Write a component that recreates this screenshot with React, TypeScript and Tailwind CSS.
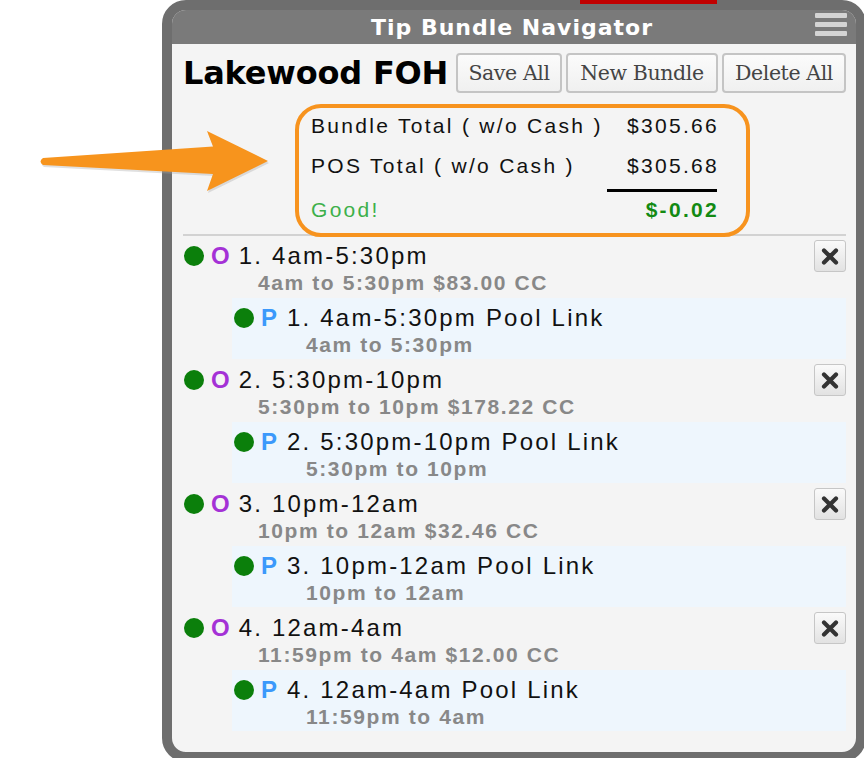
import React from "react";

interface PoolLink {
  title: string;
  range: string;
}

interface Bundle {
  title: string;
  detail: string;
  pool: PoolLink;
}

const bundles: Bundle[] = [
  {
    title: "1. 4am-5:30pm",
    detail: "4am to 5:30pm $83.00 CC",
    pool: { title: "1. 4am-5:30pm Pool Link", range: "4am to 5:30pm" },
  },
  {
    title: "2. 5:30pm-10pm",
    detail: "5:30pm to 10pm $178.22 CC",
    pool: { title: "2. 5:30pm-10pm Pool Link", range: "5:30pm to 10pm" },
  },
  {
    title: "3. 10pm-12am",
    detail: "10pm to 12am $32.46 CC",
    pool: { title: "3. 10pm-12am Pool Link", range: "10pm to 12am" },
  },
  {
    title: "4. 12am-4am",
    detail: "11:59pm to 4am $12.00 CC",
    pool: { title: "4. 12am-4am Pool Link", range: "11:59pm to 4am" },
  },
];

function StatusDot() {
  return <span className="w-[20px] h-[20px] rounded-full bg-[#0b7f0b] shrink-0" />;
}

function CloseButton() {
  return (
    <button className="ml-auto shrink-0 w-[32px] h-[32px] rounded-[3px] border border-[#c6c6c6] bg-gradient-to-b from-[#fafafa] to-[#e2e2e2] flex items-center justify-center">
      <svg width="18" height="17" viewBox="0 0 18 17">
        <path d="M3 2.5 L15 14.5 M15 2.5 L3 14.5" stroke="#333" strokeWidth="4.2" strokeLinecap="round" />
      </svg>
    </button>
  );
}

function ToolButton({ label, width }: { label: string; width: string }) {
  return (
    <button
      className={`${width} h-[40px] rounded-[4px] border-2 border-[#c4c4c4] bg-gradient-to-b from-[#fbfbfb] to-[#f0f0f0] text-[#444] text-[20.5px] font-['DejaVu_Serif',serif] tracking-[-0.4px]`}
    >
      {label}
    </button>
  );
}

function BundleItem({ bundle }: { bundle: Bundle }) {
  return (
    <div className="flex flex-col">
      <div className="flex items-center h-[28px] pl-[1px]">
        <StatusDot />
        <span className="ml-[7px] font-bold text-[24px] text-[#a431d6] leading-none">O</span>
        <span className="ml-[9px] text-[24px] tracking-[2.2px] text-[#111] leading-none">{bundle.title}</span>
        <CloseButton />
      </div>
      <div className="h-[26px] flex items-center pl-[75px] text-[21px] font-bold tracking-[1.6px] text-[#888]">
        {bundle.detail}
      </div>
      <div className="mt-[2px] ml-[49px] bg-[#eef6fd] pt-[6px] pb-[1px]">
        <div className="flex items-center h-[28px] pl-[2px]">
          <StatusDot />
          <span className="ml-[7px] font-bold text-[24px] text-[#3b99fb] leading-none">P</span>
          <span className="ml-[10px] text-[24px] tracking-[2.2px] text-[#111] leading-none">{bundle.pool.title}</span>
        </div>
        <div className="h-[26px] flex items-center pl-[74px] text-[21px] font-bold tracking-[1.6px] text-[#888]">
          {bundle.pool.range}
        </div>
      </div>
    </div>
  );
}

export default function App() {
  return (
    <div className="relative w-[864px] h-[758px] overflow-hidden bg-white font-['Liberation_Sans',Arial,sans-serif]">
      <div className="absolute left-[580px] top-0 w-[137px] h-[4px] bg-[#c00000] z-10" />

      <svg className="absolute left-0 top-0 z-10" width="300" height="220" viewBox="0 0 300 220">
        <path
          d="M43 158 L213 146.5 L207 131 L268 161 L207 191 L213 174 L43 165 Q38 161.5 43 158 Z"
          fill="#a5a5a5"
          opacity="0.35"
          transform="translate(1 2)"
        />
        <path
          d="M43 158 L213 146.5 L207 131 L268 161 L207 191 L213 174 L43 165 Q38 161.5 43 158 Z"
          fill="#f7941d"
        />
      </svg>

      <div className="ml-[162px] w-[704px] border-[10px] border-[#6e6e6e] rounded-[24px] overflow-hidden bg-[#f4f4f4]">
        <div className="relative h-[34px] bg-[#7a7a7a] flex items-center justify-center">
          <span className="text-white font-bold text-[22px] tracking-[1px] font-['DejaVu_Sans',sans-serif] -ml-[4px]">
            Tip Bundle Navigator
          </span>
          <div className="absolute right-[9px] top-[3px] flex flex-col gap-[4px]">
            <span className="w-[32px] h-[5px] bg-[#d4d4d4] rounded-[1px]" />
            <span className="w-[32px] h-[5px] bg-[#d4d4d4] rounded-[1px]" />
            <span className="w-[32px] h-[5px] bg-[#d4d4d4] rounded-[1px]" />
          </div>
        </div>

        <div className="pl-[11px] pr-[10px] pb-[21px]">
          <div className="flex items-center justify-between pt-[9px]">
            <h1 className="font-bold text-[32px] leading-none tracking-[-0.2px] text-black font-['DejaVu_Sans',sans-serif]">
              Lakewood FOH
            </h1>
            <div className="flex gap-[4px]">
              <ToolButton label="Save All" width="w-[106px]" />
              <ToolButton label="New Bundle" width="w-[152px]" />
              <ToolButton label="Delete All" width="w-[124px]" />
            </div>
          </div>

          <div className="relative z-[1] mt-[11px] ml-[112px] w-[455px] border-[4px] border-[#f7931e] rounded-[26px] pl-[12px] pr-[29px] pb-[5px] text-[21px] tracking-[2.3px] text-[#111]">
            <div className="grid grid-cols-[1fr_110px] h-[36px] items-center">
              <span>Bundle Total ( w/o Cash )</span>
              <span className="text-right -mr-[2px]">$305.66</span>
            </div>
            <div className="grid grid-cols-[1fr_110px] h-[36px] items-center mt-[4px]">
              <span>POS Total ( w/o Cash )</span>
              <span className="text-right -mr-[2px]">$305.68</span>
            </div>
            <div className="grid grid-cols-[1fr_110px] mt-[5px]">
              <span />
              <span className="h-[3px] bg-black" />
            </div>
            <div className="grid grid-cols-[1fr_110px] h-[36px] items-center">
              <span className="text-[#3db04a]">Good!</span>
              <span className="text-right -mr-[2px] font-bold text-[#138a13]">$-0.02</span>
            </div>
          </div>
          <div className="-mt-[3px] h-[2px] bg-[#d2d2d2]" />

          <div className="mt-[6px] flex flex-col gap-[7px]">
            {bundles.map((b, i) => (
              <BundleItem bundle={b} key={i} />
            ))}
          </div>
        </div>
      </div>
    </div>
  );
}
